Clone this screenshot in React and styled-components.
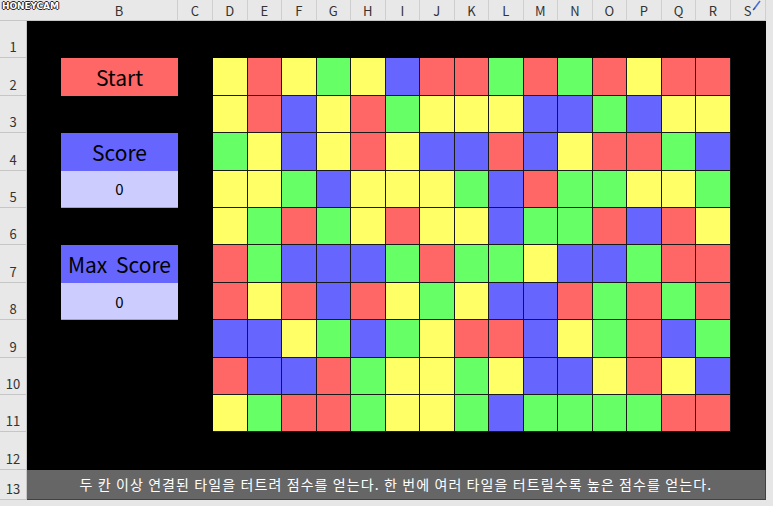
import styled, { createGlobalStyle } from 'styled-components'

const GlobalStyle = createGlobalStyle`
  html, body { margin: 0; padding: 0; background: #e6e6e6; }
  body { font-family: "Noto Sans CJK KR", "Noto Sans", sans-serif; }
`

const COLORS = { R: '#ff6666', Y: '#ffff66', G: '#66ff66', B: '#6666ff' }

const BOARD = [
  'YRYGYBRRGRGRYRR',
  'YRBYRGYYYBBGBYY',
  'GYBYRYBBRBYRRGB',
  'YYGBYYYGBRGGYYG',
  'YGRGYRYYBGGRBRY',
  'RGBBBGRGGYBBGRR',
  'RYRBRYGYBBRGRGR',
  'BBYGBGYRRBYGRBG',
  'RBBRGYYGYBBYRYB',
  'YGRRGYYGBGGGGRR',
]

const COLS = ['A', 'B', 'C', 'D', 'E', 'F', 'G', 'H', 'I', 'J', 'K', 'L', 'M', 'N', 'O', 'P', 'Q', 'R', 'S']

export default function App() {
  return (
    <>
      <GlobalStyle />
      <Sheet>
        <Corner>
          <Watermark>HONEYCAM</Watermark>
        </Corner>
        {COLS.map((c, i) => (
          <ColHead key={c} $col={i + 2}>
            {c}
            {c === 'S' && (
              <Mark viewBox="0 0 10 12">
                <path d="M2 9 L8 1" stroke="#4a6fd8" strokeWidth="1.6" fill="none" />
                <path d="M1 10 L3 8" stroke="#2c4aa8" strokeWidth="1.2" fill="none" />
              </Mark>
            )}
          </ColHead>
        ))}
        {Array.from({ length: 13 }, (_, i) => (
          <RowHead key={i} $row={i + 2}>{i + 1}</RowHead>
        ))}

        <Canvas />

        <Panel $row={3} $bg="#ff6666">Start</Panel>
        <Panel $row={5} $bg="#6666ff">Score</Panel>
        <Panel $row={6} $bg="#ccccff" $small>0</Panel>
        <Panel $row={8} $bg="#6666ff">Max Score</Panel>
        <Panel $row={9} $bg="#ccccff" $small>0</Panel>

        <Board>
          {BOARD.map((line, r) =>
            line.split('').map((ch, c) => <Tile key={r + '-' + c} $color={COLORS[ch]} />)
          )}
        </Board>

        <Hint>두 칸 이상 연결된 타일을 터트려 점수를 얻는다. 한 번에 여러 타일을 터트릴수록 높은 점수를 얻는다.</Hint>
      </Sheet>
    </>
  )
}

const Sheet = styled.div`
  width: 773px;
  height: 506px;
  display: grid;
  grid-template-columns: 27px 34px 117px 35px repeat(15, 34.53px) 35px 1fr;
  grid-template-rows: 21px repeat(12, 37.42px) 30px 1fr;
  background: #e6e6e6;
  overflow: hidden;
  position: relative;
`

const Corner = styled.div`
  grid-column: 1 / 3;
  grid-row: 1;
  background: #e8e8e8;
  border-bottom: 1px solid #c6c6c6;
  position: relative;
`

const Watermark = styled.span`
  position: absolute;
  left: 2px;
  top: 1px;
  font-family: "DejaVu Sans", sans-serif;
  font-weight: bold;
  font-size: 9px;
  letter-spacing: -0.1px;
  color: #fff;
  text-shadow: 1px 0 0 #222, -1px 0 0 #222, 0 1px 0 #222, 0 -1px 0 #222;
`

const ColHead = styled.div`
  grid-row: 1;
  grid-column: ${p => p.$col};
  display: ${p => (p.$col === 2 ? 'none' : 'flex')};
  align-items: center;
  justify-content: center;
  position: relative;
  background: #e8e8e8;
  border-right: 1px solid #cfcfcf;
  border-bottom: 1px solid #c6c6c6;
  font-family: "Noto Sans CJK KR", "Liberation Sans", sans-serif;
  font-size: 13px;
  color: #333;
`

const Mark = styled.svg`
  position: absolute;
  right: 3px;
  top: 0;
  width: 10px;
  height: 12px;
`

const RowHead = styled.div`
  grid-column: 1;
  grid-row: ${p => p.$row};
  display: flex;
  align-items: flex-end;
  justify-content: center;
  padding-bottom: 1px;
  background: #e8e8e8;
  border-bottom: 1px solid #c6c6c6;
  border-right: 1px solid #c6c6c6;
  font-family: "Noto Sans CJK KR", "Liberation Sans", sans-serif;
  font-size: 13px;
  color: #333;
`

const Canvas = styled.div`
  grid-column: 2 / 21;
  grid-row: 2 / 14;
  background: #000;
`

const Panel = styled.div`
  grid-column: 3;
  grid-row: ${p => p.$row};
  display: flex;
  align-items: center;
  justify-content: center;
  background: ${p => p.$bg};
  color: #000;
  font-size: ${p => (p.$small ? '15px' : '21px')};
  word-spacing: 4px;
  font-family: "Noto Sans CJK KR", "Noto Sans", sans-serif;
  border-bottom: ${p => (p.$small ? '1px solid #8fa7d8' : 'none')};
`

const Board = styled.div`
  grid-column: 5 / 20;
  grid-row: 3 / 13;
  display: grid;
  grid-template-columns: repeat(15, 1fr);
  grid-template-rows: repeat(10, 1fr);
  gap: 1px;
  background: #1a1a1a;
  padding-right: 1px;
  padding-bottom: 1px;
`

const Tile = styled.div`
  background: ${p => p.$color};
`

const Hint = styled.div`
  grid-column: 2 / 21;
  grid-row: 14;
  display: flex;
  align-items: center;
  justify-content: center;
  background: #666;
  border-right: 1px solid #3e3e5a;
  border-bottom: 1px solid #3e3e5a;
  color: #fff;
  font-size: 14px;
  letter-spacing: 1.1px;
  font-family: "Noto Sans CJK KR", "Noto Sans", sans-serif;
`
